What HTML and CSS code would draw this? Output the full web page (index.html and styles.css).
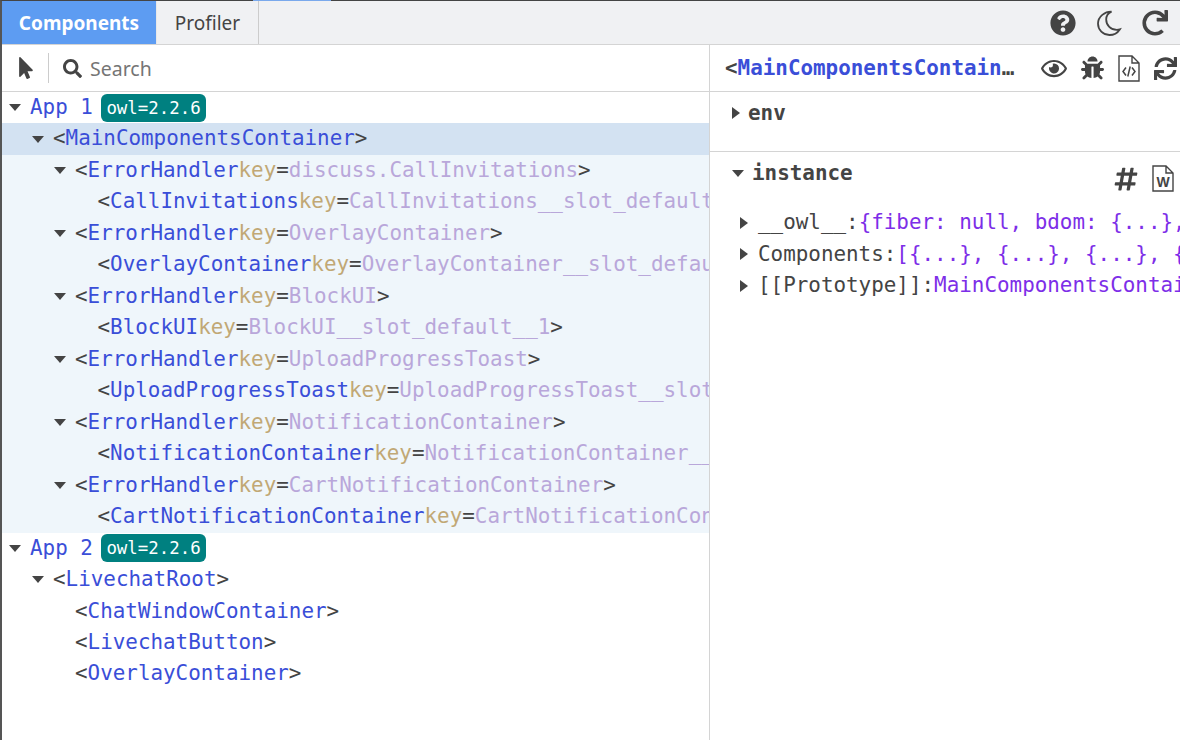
FILE: index.html
```html
<!DOCTYPE html>
<html lang="en">
<head>
<meta charset="utf-8">
<title>Owl Devtools</title>
<link rel="stylesheet" href="styles.css">
</head>
<body>
<div class="app">
  <span class="top-mark"></span>
  <header class="tabs">
    <div class="tab tab-active">Components</div>
    <div class="tab">Profiler</div>
    <div class="tab-actions">
      <svg class="ic ic-help" viewBox="0 0 512 512"><path d="M504 256c0 136.997-111.043 248-248 248S8 392.997 8 256C8 119.083 119.043 8 256 8s248 111.083 248 248zM262.655 90c-54.497 0-89.255 22.957-116.549 63.758-3.536 5.286-2.353 12.415 2.715 16.258l34.699 26.31c5.205 3.947 12.621 3.008 16.665-2.122 17.864-22.658 30.113-35.797 57.303-35.797 20.429 0 45.698 13.148 45.698 32.958 0 14.976-12.363 22.667-32.534 33.976C247.128 238.528 216 254.941 216 296v4c0 6.627 5.373 12 12 12h56c6.627 0 12-5.373 12-12v-1.333c0-28.462 83.186-29.647 83.186-106.667 0-58.002-60.165-102-116.531-102zM256 338c-25.365 0-46 20.635-46 46 0 25.364 20.635 46 46 46s46-20.636 46-46c0-25.365-20.635-46-46-46z"/></svg>
      <svg class="ic ic-moon" viewBox="0 0 26 26"><path class="moon" d="M15.5 1.6C9 1.4 2 6.4 2 13.6 2 20 7 25 13.4 25c4.4 0 8.2-2.2 10.4-5.6-1 .3-2 .4-3 .4-6 0-10.6-4.6-10.6-10.4 0-3.3 2-6.3 5.3-7.8z"/></svg>
      <svg class="ic ic-redo" viewBox="0 0 512 512"><path d="M500.33 0h-47.41a12 12 0 0 0-12 12.57l4 82.76A247.42 247.42 0 0 0 256 8C119.34 8 7.9 119.53 8 256.19 8.1 393.07 119.1 504 256 504a247.1 247.1 0 0 0 166.18-63.91 12 12 0 0 0 .48-17.43l-34-34a12 12 0 0 0-16.38-.55A176 176 0 1 1 402.1 157.8l-101.53-4.87a12 12 0 0 0-12.57 12v47.41a12 12 0 0 0 12 12h200.33a12 12 0 0 0 12-12V12a12 12 0 0 0-12-12z"/></svg>
    </div>
  </header>
  <main class="split">
    <section class="left">
      <div class="toolbar">
        <svg class="ic ic-pointer" viewBox="0 0 320 512"><path d="M302.189 329.126H196.105l55.831 135.993c3.889 9.428-.555 19.999-9.444 23.999l-49.165 21.427c-9.165 4-19.443-.571-23.332-9.714l-53.053-129.136-86.664 89.138C18.729 472.71 0 463.554 0 447.977V18.299C0 1.899 19.921-6.096 30.277 5.443l284.412 292.542c11.472 11.179 3.007 31.141-12.5 31.141z"/></svg>
        <span class="tool-sep"></span>
        <svg class="ic ic-search" viewBox="0 0 512 512"><path d="M505 442.7L405.3 343c-4.5-4.5-10.6-7-17-7H372c27.6-35.3 44-79.7 44-128C416 93.1 322.9 0 208 0S0 93.1 0 208s93.1 208 208 208c48.3 0 92.7-16.4 128-44v16.3c0 6.4 2.5 12.5 7 17l99.7 99.7c9.4 9.4 24.6 9.4 33.9 0l28.3-28.3c9.4-9.4 9.4-24.6.1-34zM208 336c-70.7 0-128-57.2-128-128 0-70.7 57.2-128 128-128 70.7 0 128 57.2 128 128 0 70.7-57.2 128-128 128z"/></svg>
        <span class="search-label">Search</span>
      </div>
      <div class="tree">
        <div class="row l0"><i class="arrow down"></i><span class="tag">App 1</span><span class="badge">owl=2.2.6</span></div>
        <div class="row l1 selected"><i class="arrow down"></i><b>&lt;</b><span class="tag">MainComponentsContainer</span><b>&gt;</b></div>
        <div class="row l2 sub"><i class="arrow down"></i><b>&lt;</b><span class="tag">ErrorHandler</span> <span class="key">key</span><b>=</b><span class="val">discuss.CallInvitations</span><b>&gt;</b></div>
        <div class="row l3 sub"><i class="arrow"></i><b>&lt;</b><span class="tag">CallInvitations</span> <span class="key">key</span><b>=</b><span class="val">CallInvitations__slot_default__1</span><b>&gt;</b></div>
        <div class="row l2 sub"><i class="arrow down"></i><b>&lt;</b><span class="tag">ErrorHandler</span> <span class="key">key</span><b>=</b><span class="val">OverlayContainer</span><b>&gt;</b></div>
        <div class="row l3 sub"><i class="arrow"></i><b>&lt;</b><span class="tag">OverlayContainer</span> <span class="key">key</span><b>=</b><span class="val">OverlayContainer__slot_default__1</span><b>&gt;</b></div>
        <div class="row l2 sub"><i class="arrow down"></i><b>&lt;</b><span class="tag">ErrorHandler</span> <span class="key">key</span><b>=</b><span class="val">BlockUI</span><b>&gt;</b></div>
        <div class="row l3 sub"><i class="arrow"></i><b>&lt;</b><span class="tag">BlockUI</span> <span class="key">key</span><b>=</b><span class="val">BlockUI__slot_default__1</span><b>&gt;</b></div>
        <div class="row l2 sub"><i class="arrow down"></i><b>&lt;</b><span class="tag">ErrorHandler</span> <span class="key">key</span><b>=</b><span class="val">UploadProgressToast</span><b>&gt;</b></div>
        <div class="row l3 sub"><i class="arrow"></i><b>&lt;</b><span class="tag">UploadProgressToast</span> <span class="key">key</span><b>=</b><span class="val">UploadProgressToast__slot_default__1</span><b>&gt;</b></div>
        <div class="row l2 sub"><i class="arrow down"></i><b>&lt;</b><span class="tag">ErrorHandler</span> <span class="key">key</span><b>=</b><span class="val">NotificationContainer</span><b>&gt;</b></div>
        <div class="row l3 sub"><i class="arrow"></i><b>&lt;</b><span class="tag">NotificationContainer</span> <span class="key">key</span><b>=</b><span class="val">NotificationContainer__slot_default__1</span><b>&gt;</b></div>
        <div class="row l2 sub"><i class="arrow down"></i><b>&lt;</b><span class="tag">ErrorHandler</span> <span class="key">key</span><b>=</b><span class="val">CartNotificationContainer</span><b>&gt;</b></div>
        <div class="row l3 sub"><i class="arrow"></i><b>&lt;</b><span class="tag">CartNotificationContainer</span> <span class="key">key</span><b>=</b><span class="val">CartNotificationContainer__slot_default__1</span><b>&gt;</b></div>
        <div class="row l0"><i class="arrow down"></i><span class="tag">App 2</span><span class="badge">owl=2.2.6</span></div>
        <div class="row l1"><i class="arrow down"></i><b>&lt;</b><span class="tag">LivechatRoot</span><b>&gt;</b></div>
        <div class="row l2"><i class="arrow"></i><b>&lt;</b><span class="tag">ChatWindowContainer</span><b>&gt;</b></div>
        <div class="row l2"><i class="arrow"></i><b>&lt;</b><span class="tag">LivechatButton</span><b>&gt;</b></div>
        <div class="row l2"><i class="arrow"></i><b>&lt;</b><span class="tag">OverlayContainer</span><b>&gt;</b></div>
      </div>
    </section>
    <aside class="right">
      <div class="detail-head">
        <div class="detail-title"><b>&lt;</b><span class="tag">MainComponentsContainer</span><b>&gt;</b></div>
        <div class="detail-actions">
          <svg class="ic ic-eye" viewBox="0 0 576 512"><path d="M288 144a110.94 110.94 0 0 0-31.24 5 55.4 55.4 0 0 1 7.24 27 56 56 0 0 1-56 56 55.4 55.4 0 0 1-27-7.24A111.71 111.71 0 1 0 288 144zm284.52 97.4C518.29 135.59 410.93 64 288 64S57.68 135.64 3.48 241.41a32.35 32.35 0 0 0 0 29.19C57.71 376.41 165.07 448 288 448s230.32-71.64 284.52-177.41a32.35 32.35 0 0 0 0-29.19zM288 400c-98.65 0-189.09-55-237.93-144C98.91 167 189.34 112 288 112s189.09 55 237.93 144C477.1 345 386.66 400 288 400z"/></svg>
          <svg class="ic ic-bug" viewBox="0 0 512 512"><path d="M511.988 288.9c-.478 17.43-15.217 31.1-32.653 31.1H424v16c0 21.864-4.882 42.584-13.6 61.145l60.228 60.228c12.496 12.497 12.496 32.758 0 45.255-12.498 12.497-32.759 12.496-45.256 0l-54.736-54.736C345.886 467.965 314.351 480 280 480V236c0-6.627-5.373-12-12-12h-24c-6.627 0-12 5.373-12 12v244c-34.351 0-65.886-12.035-90.636-32.108l-54.736 54.736c-12.498 12.497-32.759 12.496-45.256 0-12.496-12.497-12.496-32.758 0-45.255l60.228-60.228C92.882 378.584 88 357.864 88 336v-16H32.666C15.23 320 .491 306.33.013 288.9-.484 270.816 14.028 256 32 256h56v-58.745l-46.628-46.628c-12.496-12.497-12.496-32.758 0-45.255 12.498-12.497 32.758-12.497 45.256 0L141.255 160h229.489l54.627-54.627c12.498-12.497 32.758-12.497 45.256 0 12.496 12.497 12.496 32.758 0 45.255L424 197.255V256h56c17.972 0 32.484 14.816 31.988 32.9zM257 0c-61.856 0-112 50.144-112 112h224C369 50.144 318.856 0 257 0z"/></svg>
          <svg class="ic ic-file" viewBox="0 0 22 27"><path class="file-line" d="M1 1h13l7 7v18H1zM14 1v7h7"/><path class="file-code" d="M8 12.5l-3 4 3 4M14 12.5l3 4-3 4M12.2 11.5l-2.4 10"/></svg>
          <svg class="ic ic-sync" viewBox="0 0 512 512"><path d="M440.65 12.57l4 82.77A247.16 247.16 0 0 0 255.83 8C134.73 8 33.91 94.92 12.29 209.82A12 12 0 0 0 24.09 224h49.05a12 12 0 0 0 11.67-9.26 175.91 175.91 0 0 1 317-56.94l-101.46-4.86a12 12 0 0 0-12.57 12v47.41a12 12 0 0 0 12 12H500a12 12 0 0 0 12-12V12a12 12 0 0 0-12-12h-47.37a12 12 0 0 0-11.98 12.57zM255.83 432a175.61 175.61 0 0 1-146-77.8l101.8 4.87a12 12 0 0 0 12.57-12v-47.4a12 12 0 0 0-12-12H12a12 12 0 0 0-12 12V500a12 12 0 0 0 12 12h47.35a12 12 0 0 0 12-12.6l-4.15-82.57A247.17 247.17 0 0 0 255.83 504c121.11 0 221.93-86.92 243.55-201.82a12 12 0 0 0-11.8-14.18h-49.05a12 12 0 0 0-11.67 9.26A175.86 175.86 0 0 1 255.83 432z"/></svg>
        </div>
      </div>
      <div class="section section-env">
        <div class="section-title"><i class="arrow right-arrow"></i>env</div>
      </div>
      <div class="section section-instance">
        <div class="section-title"><i class="arrow down"></i>instance
          <span class="section-actions">
            <svg class="ic ic-hash" viewBox="0 0 448 512"><path d="M440.667 182.109l7.143-40c1.313-7.355-4.342-14.109-11.813-14.109h-74.81l14.623-81.891C377.123 38.754 371.468 32 363.997 32h-40.632a12 12 0 0 0-11.813 9.891L296.175 128H197.54l14.623-81.891C213.477 38.754 207.822 32 200.35 32h-40.632a12 12 0 0 0-11.813 9.891L132.528 128H53.432a12 12 0 0 0-11.813 9.891l-7.143 40C33.163 185.246 38.818 192 46.289 192h74.81L98.242 320H19.146a12 12 0 0 0-11.813 9.891l-7.143 40C-1.123 377.246 4.532 384 12.003 384h74.81L72.19 465.891C70.877 473.246 76.532 480 84.003 480h40.632a12 12 0 0 0 11.813-9.891L151.826 384h98.634l-14.623 81.891C234.523 473.246 240.178 480 247.65 480h40.632a12 12 0 0 0 11.813-9.891L315.472 384h79.096a12 12 0 0 0 11.813-9.891l7.143-40c1.313-7.355-4.342-14.109-11.813-14.109h-74.81l22.857-128h79.096a12 12 0 0 0 11.813-9.891zM261.889 320h-98.634l22.857-128h98.634l-22.857 128z"/></svg>
            <svg class="ic ic-word" viewBox="0 0 22 27"><path class="file-line" d="M1 1h13l7 7v18H1zM14 1v7h7"/><text class="word-w" x="11" y="22" text-anchor="middle">W</text></svg>
          </span>
        </div>
        <div class="props">
          <div class="prop"><i class="arrow right-arrow"></i><span class="prop-key">__owl__:</span> <span class="prop-val">{fiber: null, bdom: {...}, component: {...}}</span></div>
          <div class="prop"><i class="arrow right-arrow"></i><span class="prop-key">Components:</span> <span class="prop-val">[{...}, {...}, {...}, {...}, {...}]</span></div>
          <div class="prop"><i class="arrow right-arrow"></i><span class="prop-key">[[Prototype]]:</span> <span class="prop-val">MainComponentsContainer</span></div>
        </div>
      </div>
    </aside>
  </main>
</div>
</body>
</html>
```
FILE: styles.css
```css
* { box-sizing: border-box; }
html, body { margin: 0; height: 100%; overflow: hidden; background: #fff; }
body { font-family: "DejaVu Sans Mono", "Liberation Mono", monospace; font-size: 20.9px; color: #444; }
.app { position: relative; height: 740px; border-top: 1px solid #444; border-left: 2px solid #555; display: flex; flex-direction: column; }
.top-mark { position: absolute; top: -1px; left: 251px; width: 78px; height: 1px; background: #7aa9ec; }
.ic { display: block; fill: #444; flex: none; }

.tabs { height: 44px; flex: none; display: flex; background: #f0f1f3; border-bottom: 1px solid #d4d4d4; font-family: "Noto Sans", "Open Sans", sans-serif; font-size: 19px; }
.tab { display: flex; align-items: center; padding: 0 14px; border-right: 1px solid #ccc; }
.tab-active { background: #5d9cf2; color: #fff; font-weight: 700; width: 155px; justify-content: center; padding: 0; border-right: 1px solid #e8e8e8; }
.tab + .tab { width: 102px; justify-content: center; padding: 0; }
.tab-actions { margin-left: auto; display: flex; align-items: center; padding-right: 12px; gap: 20px; }
.ic-help { width: 26px; height: 26px; }
.ic-moon { width: 26px; height: 26px; }
.moon { fill: none; stroke: #444; stroke-width: 1.8; }
.ic-redo { width: 26px; height: 26px; }

.split { flex: 1; display: flex; min-height: 0; }
.left { width: 708px; flex: none; border-right: 1px solid #d4d4d4; display: flex; flex-direction: column; }
.toolbar { height: 47px; flex: none; display: flex; align-items: center; padding-left: 17px; border-bottom: 1px solid #d4d4d4; }
.ic-pointer { width: 14px; height: 22px; }
.tool-sep { width: 1px; height: 30px; background: #ccc; margin: 0 14px 0 15px; }
.ic-search { width: 19px; height: 19px; }
.search-label { font-family: "Noto Sans", "Open Sans", sans-serif; font-size: 19.5px; color: #757575; margin-left: 8px; }

.tree { flex: 1; min-height: 0; overflow: hidden; }
.row { height: 31.47px; line-height: 31.47px; display: flex; white-space: pre; overflow: hidden; align-items: center; }
.row.l0 { padding-left: 7px; }
.row.l1 { padding-left: 30px; }
.row.l2 { padding-left: 52px; }
.row.l3 { padding-left: 74.5px; }
.selected { background: #d3e2f2; }
.sub { background: #eff6fb; }
.arrow { display: inline-block; flex: none; width: 21px; }
.arrow.down::before, .arrow.right-arrow::before { content: ""; display: block; width: 0; height: 0; }
.arrow.down::before { border-left: 6px solid transparent; border-right: 6px solid transparent; border-top: 7px solid #444; }
.arrow.right-arrow::before { border-top: 6px solid transparent; border-bottom: 6px solid transparent; border-left: 8px solid #444; }
.row b, .detail-title b { font-weight: 400; color: #444; }
.tag { color: #3a4ed8; }
.key { color: #c1a875; }
.row b + .key { color: #c1a875; }
.val { color: #b9a7da; }
.badge { background: #008080; color: #fff; font-size: 17.4px; line-height: 28px; height: 28px; padding: 0 5.5px; border-radius: 6px; margin-left: 8px; }

.right { flex: 1; min-width: 0; display: flex; flex-direction: column; overflow: hidden; }
.detail-head { height: 47px; flex: none; display: flex; align-items: center; padding-left: 15px; border-bottom: 1px solid #d4d4d4; }
.detail-title { width: 290px; flex: none; overflow: hidden; white-space: nowrap; text-overflow: ellipsis; font-weight: 700; line-height: 42px; height: 42px; }
.detail-title b { font-weight: 700; }
.detail-actions { display: flex; align-items: center; margin-left: 26px; gap: 14px; }
.ic-eye { width: 26px; height: 23px; }
.ic-bug { width: 23px; height: 24px; }
.ic-file { width: 22px; height: 27px; }
.ic-word { width: 22px; height: 27px; }
.file-line { fill: none; stroke: #444; stroke-width: 1.4; }
.file-code { fill: none; stroke: #444; stroke-width: 1.5; }
.word-w { font-family: "Liberation Sans", sans-serif; font-size: 14px; fill: #444; }
.ic-sync { width: 23px; height: 23px; }

.section { padding-left: 22px; }
.section-env { height: 60px; flex: none; border-bottom: 1px solid #d4d4d4; }
.section-title { display: flex; align-items: center; font-weight: 700; height: 43px; line-height: 43px; }
.section-title .arrow { width: 20px; }
.section-instance { flex: 1; min-height: 0; position: relative; }
.section-instance .section-title .arrow { width: 20px; }
.section-env .section-title .arrow { width: 16px; }
.section-env .section-title { height: 42px; line-height: 42px; }
.section-actions { position: absolute; top: 13px; left: 404px; display: flex; align-items: center; gap: 14px; }
.ic-hash { width: 24px; height: 26px; }
.props { padding-left: 8px; margin-top: 12px; }
.prop { display: flex; align-items: center; height: 31.5px; line-height: 31.5px; white-space: pre; }
.prop .arrow { width: 18px; }
.prop-key { color: #444; }
.prop-val { color: #7d2ee8; }
```
